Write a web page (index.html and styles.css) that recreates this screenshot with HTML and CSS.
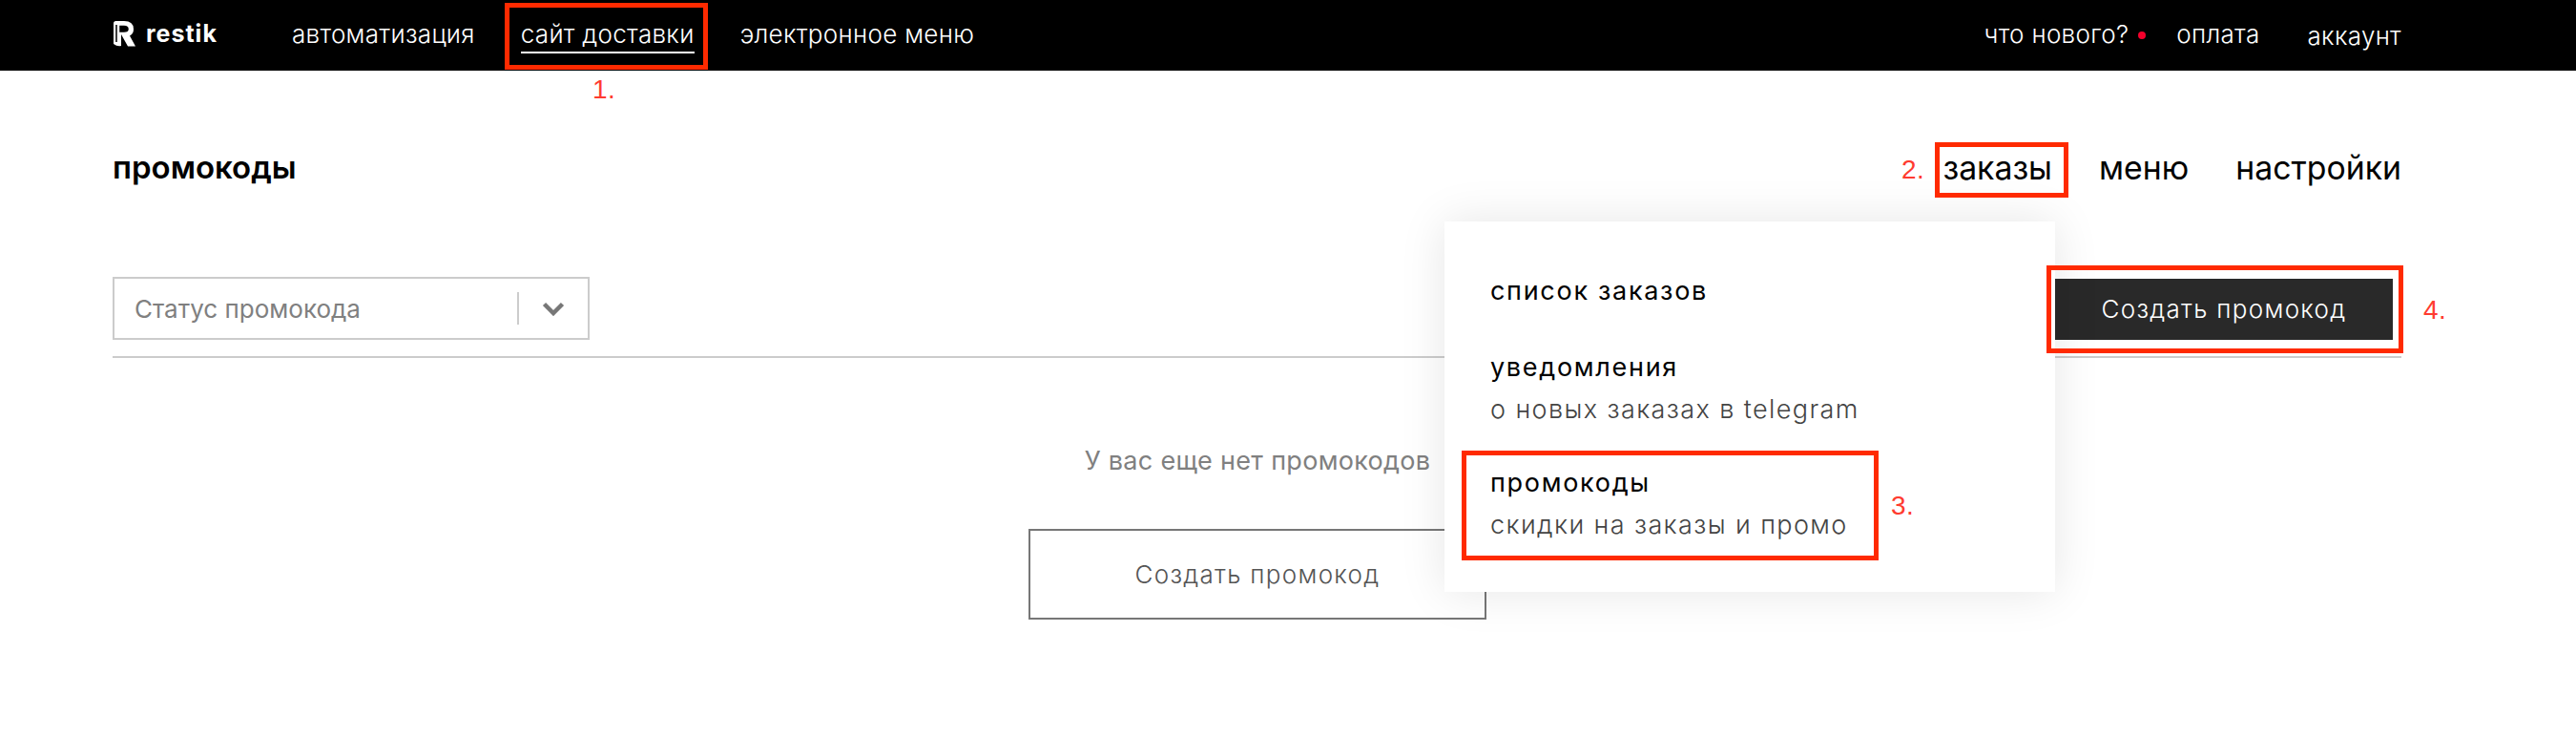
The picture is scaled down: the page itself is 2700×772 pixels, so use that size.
FILE: index.html
```html
<!DOCTYPE html>
<html lang="ru">
<head>
  <meta charset="UTF-8">
  <title>restik | промокоды</title>
  <link rel="stylesheet" href="styles.css">
</head>
<body>
  <header class="topbar">
    <a class="logo" href="#">
      <svg class="logo-mark" width="25" height="29" viewBox="0 0 25 29">
        <path d="M1 3.500 Q1 1 3.500 1 H12 Q22 1 22 9.500 Q22 14.500 18 16.500 L24 27.500 H16 L9 15 V27 Q5 28 1 25 Z" fill="#fff"/>
        <path d="M4 5 V23 M8 6.500 H12 Q16 6.500 16 9.500 Q16 12 12 12 H8 Z" fill="#000" stroke="#000" stroke-width="1.500"/>
      </svg>
      <span class="logo-text">restik</span>
    </a>
    <nav class="main-nav">
      <a href="#">автоматизация</a>
      <a href="#" class="active">сайт доставки</a>
      <a href="#">электронное меню</a>
    </nav>
    <nav class="user-nav">
      <a href="#" class="news">что нового?<span class="dot"></span></a>
      <a href="#">оплата</a>
      <a href="#" class="account">аккаунт</a>
    </nav>
  </header>

  <main class="page">
    <div class="title-row">
      <h1>промокоды</h1>
      <nav class="tabs">
        <a href="#">заказы</a>
        <a href="#">меню</a>
        <a href="#">настройки</a>
      </nav>
    </div>

    <div class="toolbar">
      <div class="select">
        <span class="select-label">Статус промокода</span>
        <span class="select-sep"></span>
        <svg class="select-arrow" width="24" height="15" viewBox="0 0 24 15">
          <path d="M2.500 2.500 L12 12 L21.500 2.500" fill="none" stroke="#777" stroke-width="4.500"/>
        </svg>
      </div>
      <button type="button" class="btn-dark">Создать промокод</button>
    </div>

    <section class="empty">
      <p>У вас еще нет промокодов</p>
      <button type="button" class="btn-outline">Создать промокод</button>
    </section>

    <div class="dropdown">
      <a href="#" class="drop-item first"><b>список заказов</b></a>
      <a href="#" class="drop-item"><b>уведомления</b><span>о новых заказах в telegram</span></a>
      <a href="#" class="drop-item"><b>промокоды</b><span>скидки на заказы и промо</span></a>
    </div>
  </main>

  <!-- пометки поверх скриншота -->
  <div class="mark mark-1"></div>
  <div class="mark mark-2"></div>
  <div class="mark mark-3"></div>
  <div class="mark mark-4"></div>
  <span class="num num-1">1.</span>
  <span class="num num-2">2.</span>
  <span class="num num-3">3.</span>
  <span class="num num-4">4.</span>
</body>
</html>
```

FILE: styles.css
```css
body {
  font-family: 'Inter', 'Noto Sans', sans-serif;
  margin: 0;
  padding: 0;
  background: #fff;
  color: #000;
  position: relative;
  height: 772px;
  overflow: hidden;
}

a {
  color: inherit;
  text-decoration: none;
}

.topbar {
  background: #000;
  color: #fff;
  height: 74px;
  box-sizing: border-box;
  display: flex;
  align-items: center;
  padding: 0 183px 4px 118px;
  font-size: 26px;
  font-weight: 300;
  letter-spacing: 0.3px;
}

.logo {
  display: flex;
  align-items: center;
  gap: 10px;
  width: 188px;
}

.logo-text {
  font-size: 25px;
  font-weight: 700;
  letter-spacing: 1px;
}

.main-nav {
  display: flex;
  gap: 48px;
}

.main-nav a {
  position: relative;
}

.main-nav .active::after {
  content: "";
  position: absolute;
  left: 0;
  right: 0;
  bottom: -5px;
  height: 2px;
  background: #fff;
}

.user-nav {
  display: flex;
  gap: 50px;
  margin-left: auto;
}

.news {
  display: flex;
  align-items: center;
}

.dot {
  width: 8px;
  height: 8px;
  margin: 4px -18px 0 10px;
  border-radius: 50%;
  background: #f5002b;
}

.account {
  position: relative;
  top: 2px;
}

.page {
  padding: 0 183px 0 118px;
  position: relative;
}

.title-row {
  display: flex;
  justify-content: space-between;
  align-items: center;
  height: 216px;
  padding-bottom: 14px;
  box-sizing: border-box;
}

h1 {
  margin: 0;
  font-size: 33px;
  font-weight: 600;
}

.tabs {
  display: flex;
  gap: 49px;
  font-size: 33.8px;
  font-weight: 400;
}

.toolbar {
  display: flex;
  justify-content: space-between;
  align-items: flex-end;
  padding-bottom: 17px;
  border-bottom: 2px solid #ccc;
}

.select {
  width: 500px;
  height: 66px;
  box-sizing: border-box;
  border: 2px solid #ccc;
  display: flex;
  align-items: center;
  padding-left: 21px;
  color: #808080;
  font-size: 26px;
  font-weight: 400;
}

.select-sep {
  width: 2px;
  height: 34px;
  background: #ccc;
  margin-left: auto;
}

.select-arrow {
  margin: 0 24px;
}

.btn-dark {
  width: 354px;
  height: 64px;
  margin-right: 9px;
  padding-bottom: 3px;
  background: #292929;
  color: #fff;
  border: none;
  font: 300 26px 'Inter', sans-serif;
  letter-spacing: 1.3px;
}

.empty {
  width: 480px;
  margin: 0 0 0 960px;
  text-align: center;
}

.empty p {
  margin: 0;
  padding-top: 94px;
  height: 85px;
  line-height: 28px;
  color: #808080;
  font-size: 27px;
  font-weight: 400;
  letter-spacing: 0.3px;
  white-space: nowrap;
}

.btn-outline {
  width: 480px;
  height: 95px;
  background: #fff;
  border: 2px solid #777;
  color: #555;
  font: 300 26px 'Inter', sans-serif;
  letter-spacing: 1.3px;
}

.dropdown {
  position: absolute;
  left: 1514px;
  top: 158px;
  width: 640px;
  height: 388px;
  box-sizing: border-box;
  padding: 53px 48px 0;
  background: #fff;
  box-shadow: 0 0 45px rgba(0,0,0,0.1);
}

.drop-item {
  display: block;
  margin-bottom: 37px;
  font-size: 27px;
}

.drop-item.first {
  margin-bottom: 40px;
}

.drop-item b {
  display: block;
  font-weight: 400;
  line-height: 40px;
  letter-spacing: 1.7px;
}

.drop-item span {
  display: block;
  margin-top: 4px;
  font-weight: 300;
  line-height: 40px;
  letter-spacing: 1.4px;
  color: #444;
}

.mark {
  position: absolute;
  box-sizing: border-box;
  border: 5px solid #ff2a00;
}

.mark-1 { left: 529px; top: 3px; width: 213px; height: 70px; }
.mark-2 { left: 2028px; top: 149px; width: 140px; height: 58px; }
.mark-3 { left: 1532px; top: 472px; width: 437px; height: 115px; }
.mark-4 { left: 2145px; top: 278px; width: 374px; height: 92px; }

.num {
  position: absolute;
  font-family: 'Liberation Sans', sans-serif;
  font-size: 28px;
  letter-spacing: 0.5px;
  line-height: 30px;
  color: #ff3b30;
}

.num-1 { left: 621px; top: 79px; }
.num-2 { left: 1993px; top: 163px; }
.num-3 { left: 1982px; top: 515px; }
.num-4 { left: 2540px; top: 310px; }
```
